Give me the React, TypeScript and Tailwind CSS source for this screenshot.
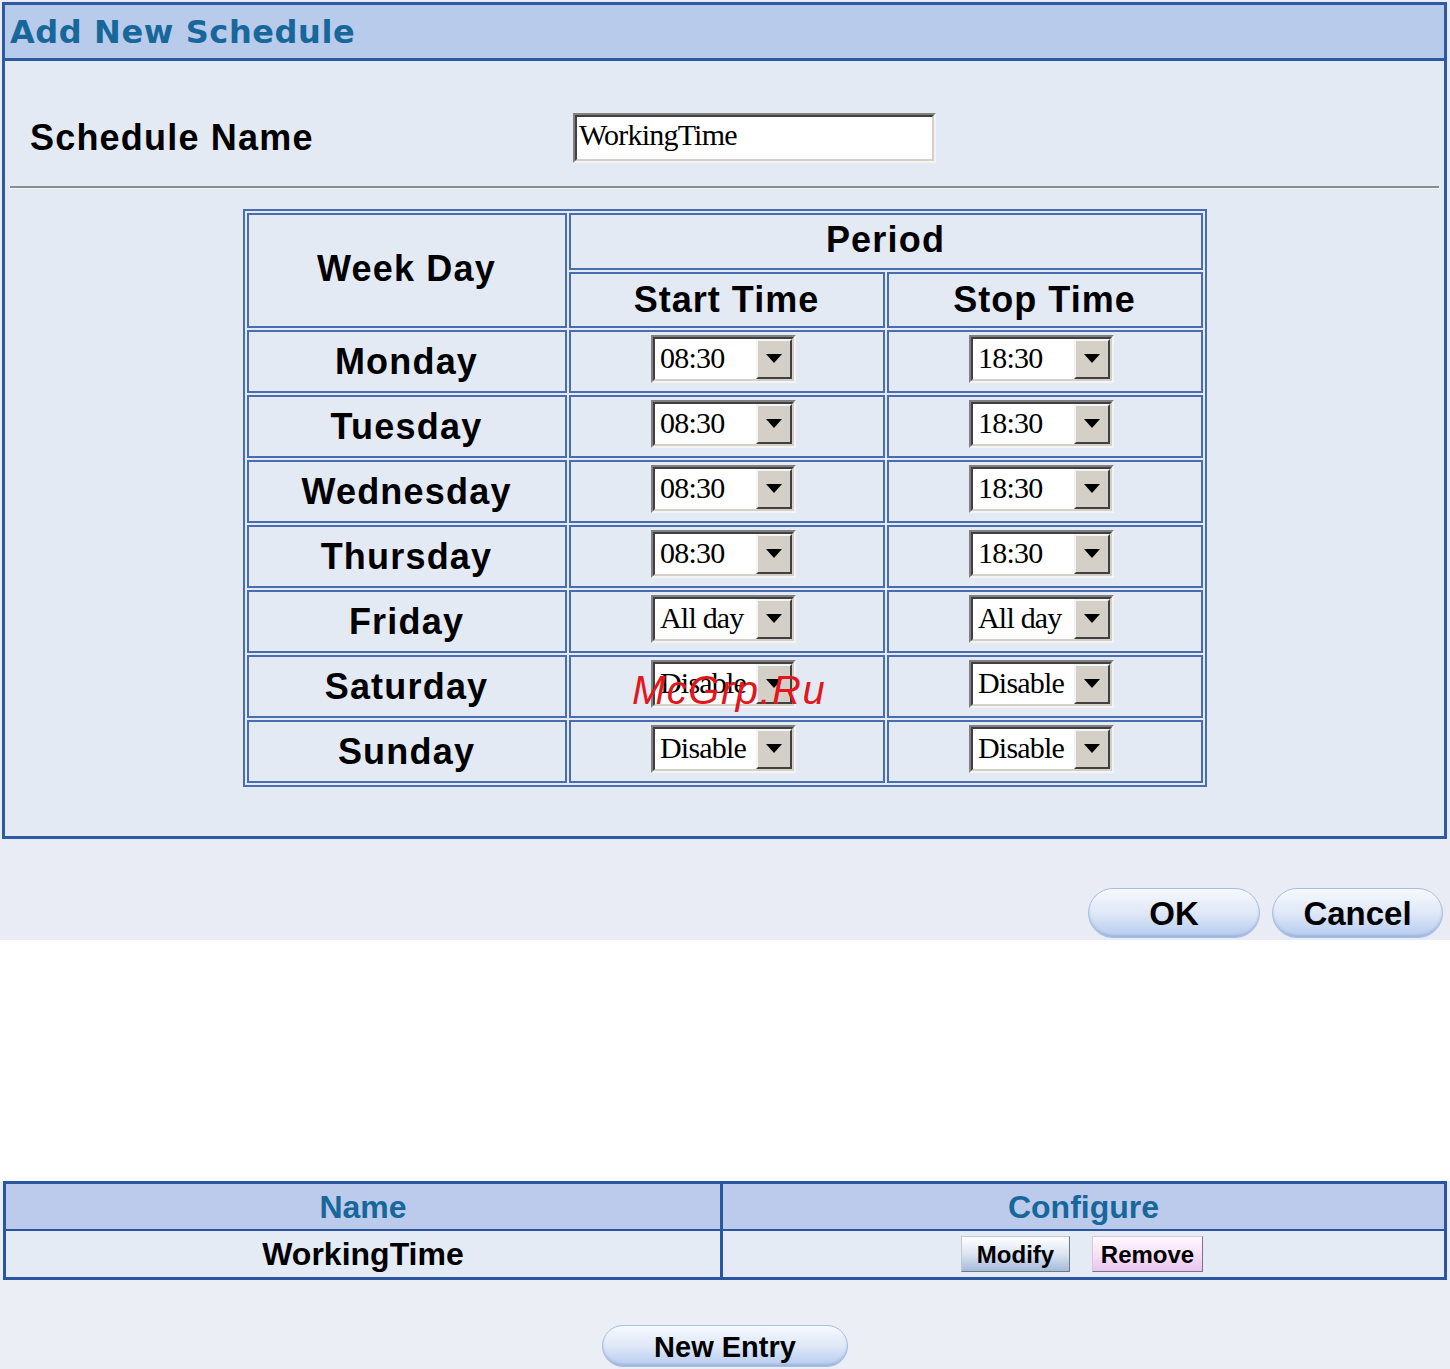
const SANS = "font-['Liberation_Sans',Arial,sans-serif]";
const SERIF = "font-['Liberation_Serif','Times_New_Roman',serif]";

type Row = { day: string; start: string; stop: string };

const ROWS: Row[] = [
  { day: 'Monday', start: '08:30', stop: '18:30' },
  { day: 'Tuesday', start: '08:30', stop: '18:30' },
  { day: 'Wednesday', start: '08:30', stop: '18:30' },
  { day: 'Thursday', start: '08:30', stop: '18:30' },
  { day: 'Friday', start: 'All day', stop: 'All day' },
  { day: 'Saturday', start: 'Disable', stop: 'Disable' },
  { day: 'Sunday', start: 'Disable', stop: 'Disable' },
];

function Select({ value }: { value: string }) {
  return (
    <div className="mx-auto w-[145px] h-[48px] flex border-2 border-t-[#808080] border-l-[#808080] border-b-[#f4f4f4] border-r-[#f4f4f4]">
      <div className="flex-1 flex bg-white border-2 border-t-[#404040] border-l-[#404040] border-b-[#d4d0c8] border-r-[#d4d0c8]">
        <span className={`${SERIF} flex-1 text-left pl-[5px] text-[30px] leading-[38px] text-black whitespace-nowrap overflow-hidden tracking-[-0.8px]`}>
          {value}
        </span>
        <div className="w-[36px] h-full flex items-center justify-center bg-[#d4d0c8] border-2 border-t-[#f4f4f4] border-l-[#f4f4f4] border-b-[#404040] border-r-[#404040]">
          <svg width="16" height="9" viewBox="0 0 16 9">
            <path d="M0 0H16L8 9Z" fill="#000" />
          </svg>
        </div>
      </div>
    </div>
  );
}

function PillButton({ label, w, h, size }: { label: string; w: string; h: string; size: string }) {
  return (
    <button
      className={`${SANS} ${w} ${h} ${size} font-bold text-black rounded-full border border-[#a8bde2] bg-linear-to-b from-[#f6f9fe] via-[#dfe8f7] to-[#b5cbee] shadow-[inset_0_-2px_2px_rgba(120,150,200,0.4)]`}
    >
      {label}
    </button>
  );
}

const cell = 'border-2 border-[#4a6db2] text-center align-middle p-0';

export default function App() {
  return (
    <div className={`${SANS} relative w-[1450px] min-h-[1369px] bg-white`}>
      {/* Add New Schedule panel */}
      <div className="bg-[#e9ecf5] pt-[2px] pb-[2px]">
        <div className="ml-[2px] mr-[3px] border-[3px] border-[#2c5aa3]">
          <div className="h-[56px] flex items-center pl-[5px] bg-[#b9cbeb] border-b-[3px] border-[#2c5aa3]">
            <span className="font-['DejaVu_Sans',sans-serif] font-bold text-[32px] text-[#17679b] tracking-[0.6px]">
              Add New Schedule
            </span>
          </div>

          <div className="bg-[#e3eaf4] pb-[49px]">
            <div className="flex items-center pt-[50px] pb-[21px]">
              <div className="w-[568px] pl-[25px] text-[36px] font-bold tracking-[1.2px] text-black">
                Schedule Name
              </div>
              <div className="w-[363px] h-[50px] flex border-2 border-t-[#808080] border-l-[#808080] border-b-[#f4f4f4] border-r-[#f4f4f4]">
                <div className="flex-1 bg-white border-2 border-t-[#404040] border-l-[#404040] border-b-[#d4d0c8] border-r-[#d4d0c8]">
                  <span className={`${SERIF} block pl-[2px] text-[30px] leading-[36px] tracking-[-0.8px] text-black`}>
                    WorkingTime
                  </span>
                </div>
              </div>
            </div>

            <div className="mx-[5px] h-[3px] border-t-2 border-[#8c8c8c] bg-[#f2f4f8]" />

            <table className="mt-[20px] mx-auto border-2 border-[#4a6db2] border-separate border-spacing-[2px]">
              <tbody>
                <tr>
                  <td rowSpan={2} className={`${cell} w-[320px] text-[36px] leading-[40px] font-bold tracking-[1.2px] pb-[4px]`}>
                    Week Day
                  </td>
                  <td colSpan={2} className={`${cell} h-[57px] text-[36px] leading-[40px] font-bold tracking-[1.2px] pb-[3px]`}>
                    Period
                  </td>
                </tr>
                <tr>
                  <td className={`${cell} w-[316px] h-[56px] text-[36px] leading-[40px] font-bold tracking-[1px]`}>Start Time</td>
                  <td className={`${cell} w-[316px] h-[56px] text-[36px] leading-[40px] font-bold tracking-[1px]`}>Stop Time</td>
                </tr>
                {ROWS.map(r => (
                  <tr key={r.day}>
                    <td className={`${cell} h-[63px] text-[36px] leading-[40px] font-bold tracking-[1.2px]`}>{r.day}</td>
                    <td className={`${cell} h-[63px]`}>
                      <div className="pr-[6px] pb-[6px]"><Select value={r.start} /></div>
                    </td>
                    <td className={`${cell} h-[63px]`}>
                      <div className="pr-[6px] pb-[6px]"><Select value={r.stop} /></div>
                    </td>
                  </tr>
                ))}
              </tbody>
            </table>
          </div>
        </div>

        <div className="mt-[49px] flex justify-end gap-[12px] pr-[7px]">
          <PillButton label="OK" w="w-[172px]" h="h-[50px]" size="text-[33px]" />
          <PillButton label="Cancel" w="w-[171px]" h="h-[50px]" size="text-[33px]" />
        </div>
      </div>

      <div className="h-[241px] bg-white" />

      {/* Schedule list */}
      <div className="bg-[#eceef6] px-[3px] pb-[2px]">
        <div className="border-[3px] border-[#2a55a0]">
          <div className="flex h-[47px] bg-[#bccaec] border-b-[2px] border-[#2a55a0]">
            <div className="w-[717px] border-r-[3px] border-[#2a55a0] flex items-center justify-center text-[32px] font-bold text-[#17679b]">
              Name
            </div>
            <div className="flex-1 flex items-center justify-center text-[32px] font-bold text-[#17679b]">
              Configure
            </div>
          </div>
          <div className="flex h-[46px] bg-[#e4ebf5]">
            <div className="w-[717px] border-r-[3px] border-[#2a55a0] flex items-center justify-center text-[32px] font-bold text-black">
              WorkingTime
            </div>
            <div className="flex-1 flex items-center justify-center gap-[22px] pr-[3px]">
              <button className="w-[109px] h-[36px] text-[24px] font-bold text-black border border-[#c4c8d0] border-r-[#707880] border-b-[#707880] bg-linear-to-b from-[#ffffff] via-[#dbe4f1] to-[#a6badb]">
                Modify
              </button>
              <button className="w-[111px] h-[36px] text-[24px] font-bold text-black border border-[#d8c8dc] border-r-[#807088] border-b-[#807088] bg-linear-to-b from-[#fff8ff] via-[#f6e2f8] to-[#e8c4ee]">
                Remove
              </button>
            </div>
          </div>
        </div>

        <div className="mt-[45px] flex justify-center">
          <PillButton label="New Entry" w="w-[246px]" h="h-[42px]" size="text-[29px]" />
        </div>
      </div>

      {/* watermark */}
      <span className="absolute left-[632px] top-[660px] text-[40px] italic text-[#e3161d] tracking-[1.5px] pointer-events-none">
        McGrp.Ru
      </span>
    </div>
  );
}
